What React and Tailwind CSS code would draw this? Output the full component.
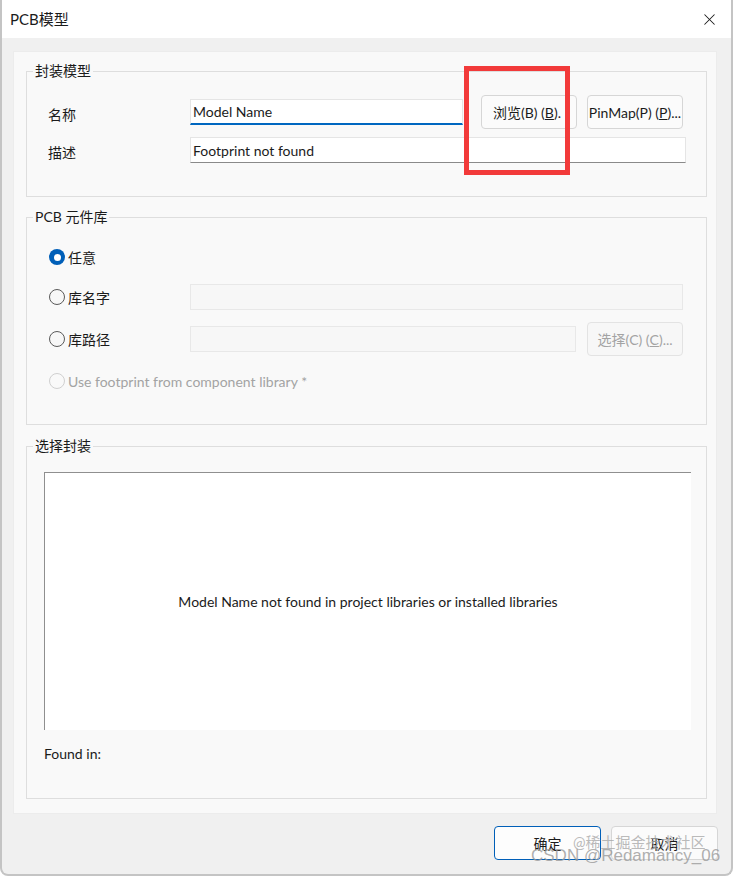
import { X } from "lucide-react";

const font = { fontFamily: 'Lato, "Noto Sans CJK SC", sans-serif' };

const Group = ({ title, className, children }) => (
  <div className={"relative border border-[#dedede] " + className}>
    <span className="absolute -top-[11px] left-[6px] bg-[#f9f9f9] px-[2px] text-[14px] leading-[20px] text-[#1b1b1b]">
      {title}
    </span>
    {children}
  </div>
);

const Radio = ({ checked, disabled, label }) => (
  <div className="flex items-center gap-[3px]">
    {checked ? (
      <span className="w-[16px] h-[16px] rounded-full bg-[#005fb8] flex items-center justify-center">
        <span className="w-[7px] h-[7px] rounded-full bg-white" />
      </span>
    ) : (
      <span
        className={
          "w-[16px] h-[16px] rounded-full border " +
          (disabled ? "border-[#d0d0d0] bg-[#f9f9f9]" : "border-[#5a5a5a] bg-[#f7f7f7]")
        }
      />
    )}
    <span className={"text-[14px] " + (disabled ? "text-[#a3a3a3]" : "text-[#1b1b1b]")}>{label}</span>
  </div>
);

const Button = ({ children, className, disabled }) => (
  <div
    className={
      "flex items-center justify-center whitespace-nowrap overflow-hidden rounded-[4px] border text-[14px] " +
      (disabled
        ? "border-[#e3e3e3] bg-[#f7f7f7] text-[#a3a3a3] "
        : "border-[#d6d6d6] bg-[#fbfbfb] text-[#1b1b1b] ") +
      className
    }
  >
    {children}
  </div>
);

export default function App() {
  return (
    <div style={font} className="relative w-[733px] h-[876px] overflow-hidden bg-[#f0f0f0] border-x-2 border-b-2 border-[#c4c4c4] rounded-b-[8px]">
      <div className="h-[38px] bg-white flex items-center justify-between pl-[8px] pr-[12px]">
        <span className="text-[15px] text-[#1b1b1b]">PCB模型</span>
        <X size={19} strokeWidth={1.3} className="text-[#1b1b1b]" />
      </div>

      <div className="ml-[11px] mt-[13px] w-[704px] h-[763px] bg-[#f9f9f9] border border-[#ececec] pt-[19px] pl-[12px]">
        <Group title="封装模型" className="w-[681px] h-[126px]">
          <div className="flex items-center h-[34px] mt-[23px]">
            <span className="w-[163px] pl-[21px] pt-[5px] text-[14px] text-[#1b1b1b]">名称</span>
            <div className="w-[273px] h-[26px] bg-white border border-[#e5e5e5] border-b-2 border-b-[#0067c0] flex items-center pl-[2px] text-[14px] text-[#1b1b1b]">
              Model Name
            </div>
            <Button className="ml-[18px] w-[96px] h-[34px] !justify-start pl-[11px]">
              浏览(B) (<span className="underline">B</span>).
            </Button>
            <Button className="ml-[10px] w-[96px] h-[34px]">
              PinMap(P) (<span className="underline">P</span>)...
            </Button>
          </div>
          <div className="flex items-center h-[26px] mt-[8px]">
            <span className="w-[163px] pl-[21px] pt-[5px] text-[14px] text-[#1b1b1b]">描述</span>
            <div className="w-[496px] h-[26px] bg-white border border-[#e5e5e5] border-b-[#8a8a8a] flex items-center pl-[2px] text-[14px] text-[#1b1b1b]">
              Footprint not found
            </div>
          </div>
        </Group>

        <Group title="PCB 元件库" className="w-[681px] h-[208px] mt-[20px]">
          <div className="pl-[22px] mt-[29px] h-[20px] flex items-center">
            <Radio checked label="任意" />
          </div>
          <div className="flex items-center h-[26px] mt-[17px]">
            <div className="w-[163px] pl-[22px]">
              <Radio label="库名字" />
            </div>
            <div className="w-[493px] h-[26px] bg-[#f7f7f7] border border-[#e8e8e8]" />
          </div>
          <div className="flex items-center h-[34px] mt-[12px]">
            <div className="w-[163px] pl-[22px]">
              <Radio label="库路径" />
            </div>
            <div className="w-[386px] h-[26px] bg-[#f7f7f7] border border-[#e8e8e8]" />
            <Button disabled className="ml-[11px] w-[96px] h-[34px]">
              选择(C) (<span className="underline">C</span>)...
            </Button>
          </div>
          <div className="pl-[22px] mt-[15px] h-[20px] flex items-center">
            <Radio disabled label="Use footprint from component library *" />
          </div>
        </Group>

        <Group title="选择封装" className="w-[681px] h-[353px] mt-[21px]">
          <div className="ml-[17px] mt-[25px] w-[647px] h-[258px] bg-white border-t border-l border-[#8f8f8f] flex items-center justify-center text-[14px] text-[#1b1b1b]">
            Model Name not found in project libraries or installed libraries
          </div>
          <div className="ml-[17px] mt-[13px] text-[14px] text-[#1b1b1b]">Found in:</div>
        </Group>
      </div>

      <div className="flex justify-end pr-[13px] pt-[12px] gap-[10px]">
        <div className="w-[107px] h-[34px] rounded-[4px] border border-[#005fb8] bg-[#fdfdfd] flex items-center justify-center text-[14px] text-[#1b1b1b]">
          确定
        </div>
        <div className="w-[107px] h-[34px] rounded-[4px] border border-[#d6d6d6] bg-[#fbfbfb] flex items-center justify-center text-[14px] text-[#1b1b1b]">
          取消
        </div>
      </div>

      <div className="absolute left-[462px] top-[66px] w-[106px] h-[109px] border-[5px] border-[#f23a3a]" />

      <div className="absolute left-[571px] top-[832px] text-[15px] leading-[20px] text-[#a8a8a8]/80">
        @稀土掘金技术社区
      </div>
      <div className="absolute left-[529px] top-[845px] text-[17px] leading-[22px] text-[#9a9a9a]/80" style={{ fontFamily: '"Liberation Sans", sans-serif' }}>
        CSDN @Redamancy_06
      </div>
    </div>
  );
}
